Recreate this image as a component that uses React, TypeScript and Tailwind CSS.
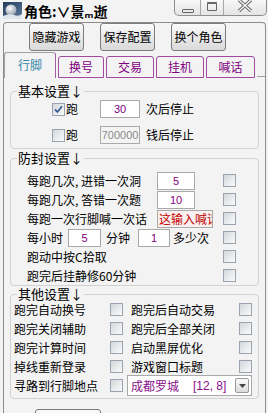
import React from "react";

const FONT = "font-['Noto_Sans_CJK_SC','Noto_Sans',sans-serif]";

function Check({ checked = false }: { checked?: boolean }) {
  return (
    <span className="w-[13px] h-[13px] shrink-0 border border-[#9ba4ae] bg-linear-to-br from-[#d3d7db] to-[#fbfbfb] flex items-center justify-center">
      {checked && (
        <svg width="9" height="9" viewBox="0 0 9 9">
          <path d="M1 4.5 L3.5 7 L8 1.2" fill="none" stroke="#3d5f96" strokeWidth="1.8" />
        </svg>
      )}
    </span>
  );
}

function Field({ className, children }: { className: string; children?: React.ReactNode }) {
  return (
    <span
      className={`h-[18px] shrink-0 border border-[#a9a9a9] flex items-center justify-center text-[11px] font-['Liberation_Sans',sans-serif] ${className}`}
    >
      {children}
    </span>
  );
}

function Group({ title, className, children }: { title: string; className: string; children: React.ReactNode }) {
  return (
    <fieldset className={`border border-[#d2d2d2] rounded-[4px] ${className}`}>
      <legend className="ml-[6px] px-[1px] text-[13px] leading-[14px]">{title}</legend>
      {children}
    </fieldset>
  );
}

function TitleBar() {
  return (
    <div className="h-[22px] flex items-start">
      <svg width="19" height="17" viewBox="0 0 19 17" className="mt-[2px] ml-[3px]">
        <defs>
          <linearGradient id="sky" x1="0" y1="0" x2="1" y2="1">
            <stop offset="0" stopColor="#223a5a" />
            <stop offset="1" stopColor="#5c7c9c" />
          </linearGradient>
          <radialGradient id="moon" cx="0.4" cy="0.35" r="0.7">
            <stop offset="0" stopColor="#ffffff" />
            <stop offset="1" stopColor="#8c9aa8" />
          </radialGradient>
        </defs>
        <rect x="0" y="0" width="19" height="17" fill="url(#sky)" />
        <circle cx="8" cy="8" r="5.5" fill="url(#moon)" />
        <path d="M0 14 Q6 11 11 13 T19 12 V17 H0 Z" fill="#dfe6ec" />
      </svg>
      <span className="ml-[2px] mt-[2px] text-[14px] leading-[18px] font-bold">角色:∨景ₘ逝</span>
      <div className="ml-auto mr-[1px] h-[16px] w-[93px] flex border border-t-0 border-[#8e8e8e] rounded-b-[5px] bg-linear-to-b from-[#f8f8f8] to-[#e4e4e4]">
        <div className="w-[26px] border-r border-[#a8a8a8] flex items-end justify-center pb-[2px]">
          <span className="w-[12px] h-[4px] border border-[#666] rounded-[1px]" />
        </div>
        <div className="w-[23px] border-r border-[#a8a8a8] flex items-start justify-center pt-[2px]">
          <span className="w-[10px] h-[9px] border border-[#666] border-t-2 rounded-[1px]" />
        </div>
        <div className="flex-1 flex items-start justify-center">
          <svg width="16" height="12" viewBox="0 0 16 12">
            <path d="M2 0 L14 11 M14 0 L2 11" stroke="#6a6a6a" strokeWidth="3.4" />
            <path d="M2 0 L14 11 M14 0 L2 11" stroke="#f4f4f4" strokeWidth="1.4" />
          </svg>
        </div>
      </div>
    </div>
  );
}

const tabs = [
  { name: "行脚", w: "w-[52px]" },
  { name: "换号", w: "w-[46px]" },
  { name: "交易", w: "w-[48px]" },
  { name: "挂机", w: "w-[48px]" },
  { name: "喊话", w: "w-[49px]" },
];

function Tabs() {
  return (
    <div className="mt-[1px] h-[26px] flex items-end gap-[2px]">
      {tabs.map((t, i) =>
        i === 0 ? (
          <div
            key={t.name}
            className={`${t.w} h-[26px] border border-b-0 border-[#a0a0a0] border-r-[#a060a0] rounded-t-[3px] text-[12px] text-[#3388aa] flex items-center justify-center pb-[2px]`}
          >
            {t.name}
          </div>
        ) : (
          <div
            key={t.name}
            className={`${t.w} h-[22px] border border-[#a24aa2] rounded-t-[3px] text-[12px] text-[#7d007d] flex items-center justify-center`}
          >
            {t.name}
          </div>
        )
      )}
      <div className="flex-1 h-[1px] mb-[1px] bg-[#a0a0a0]" />
    </div>
  );
}

function Button({ label, className = "" }: { label: string; className?: string }) {
  return (
    <div
      className={`w-[55px] h-[28px] border border-[#7d7d7d] rounded-[3px] bg-linear-to-b from-[#fafafa] to-[#d9d9d9] flex items-center justify-center text-[12px] ${className}`}
    >
      {label}
    </div>
  );
}

const other = [
  ["跑完自动换号", "跑完后自动交易"],
  ["跑完关闭辅助", "跑完后全部关闭"],
  ["跑完计算时间", "启动黑屏优化"],
  ["掉线重新登录", "游戏窗口标题"],
];

export default function App() {
  return (
    <div className={`w-[268px] h-[413px] overflow-hidden bg-[#f3f3f3] text-black ${FONT}`}>
      <TitleBar />
      <div className="ml-[3px] w-[263px] h-[391px] border border-b-0 border-[#8d8d8d] rounded-t-[4px] flex flex-col">
        <div className="flex pl-[25px] gap-[16px]">
          <Button label="隐藏游戏" />
          <Button label="保存配置" />
          <Button label="换个角色" />
        </div>
        <Tabs />

        <div className="pl-[6px] flex flex-col text-[12px] leading-[14px]">
          <Group title="基本设置↓" className="mt-[6px] w-[249px] pb-[4px]">
            <div className="mt-[2px] h-[18px] flex items-center pl-[41px]">
              <Check checked />
              <span className="ml-[1px]">跑</span>
              <Field className="ml-[22px] w-[40px] bg-white text-[#800080]">30</Field>
              <span className="ml-[6px]">次后停止</span>
            </div>
            <div className="mt-[8px] h-[18px] flex items-center pl-[41px]">
              <Check />
              <span className="ml-[1px]">跑</span>
              <Field className="ml-[22px] w-[40px] bg-[#f4f4f4] text-[#8a8a8a]">700000</Field>
              <span className="ml-[6px]">钱后停止</span>
            </div>
          </Group>

          <Group title="防封设置↓" className="mt-[2px] w-[249px] pr-[22px]">
            <div className="mt-[6px] flex flex-col">
              <div className="h-[19px] flex items-center pl-[16px]">
                <span className="w-[130px]">每跑几次, 进错一次洞</span>
                <Field className="w-[38px] bg-white text-[#800080]">5</Field>
                <span className="ml-auto"><Check /></span>
              </div>
              <div className="h-[19px] flex items-center pl-[16px]">
                <span className="w-[130px]">每跑几次, 答错一次题</span>
                <Field className="w-[38px] bg-white text-[#800080]">10</Field>
                <span className="ml-auto"><Check /></span>
              </div>
              <div className="h-[19px] flex items-center pl-[16px]">
                <span className="w-[130px] whitespace-nowrap">每跑一次行脚喊一次话</span>
                <Field className="w-[56px] bg-[#fbf0f0] text-[#c00000] text-[12px] justify-start pl-[1px] overflow-hidden whitespace-nowrap font-['Noto_Sans_CJK_SC',sans-serif]">
                  这输入喊话
                </Field>
                <span className="ml-auto"><Check /></span>
              </div>
              <div className="h-[19px] flex items-center pl-[16px]">
                <span>每小时</span>
                <Field className="ml-[5px] w-[33px] bg-white text-[#800080]">5</Field>
                <span className="ml-[5px]">分钟</span>
                <Field className="ml-[8px] w-[32px] bg-white text-[#800080]">1</Field>
                <span className="ml-[3px]">多少次</span>
                <span className="ml-auto"><Check /></span>
              </div>
              <div className="h-[19px] flex items-center pl-[16px]">
                <span>跑动中按C拾取</span>
                <span className="ml-auto"><Check /></span>
              </div>
              <div className="h-[19px] flex items-center pl-[16px]">
                <span>跑完后挂静修60分钟</span>
                <span className="ml-auto"><Check /></span>
              </div>
            </div>
          </Group>

          <Group title="其他设置↓" className="mt-[1px] w-[249px] pb-[3px]">
            <div className="-mt-[1px] flex flex-col pl-[3px] pr-[6px]">
              {other.map(([a, b]) => (
                <div key={a} className="h-[19px] flex items-center">
                  <span className="w-[96px]">{a}</span>
                  <Check />
                  <span className="ml-[8px]">{b}</span>
                  <span className="ml-auto"><Check /></span>
                </div>
              ))}
              <div className="h-[19px] flex items-center">
                <span className="w-[96px]">寻路到行脚地点</span>
                <Check />
                <div className="ml-[4px] flex-1 h-[21px] border border-[#a9a9a9] bg-white flex items-center pl-[3px] pr-[2px] text-[#8a108a]">
                  <span>成都罗城</span>
                  <span className="ml-[14px] font-['Liberation_Sans',sans-serif] text-[12px]">[12, 8]</span>
                  <span className="ml-auto w-[14px] h-[15px] border border-[#9a9a9a] rounded-[2px] bg-linear-to-b from-[#fafafa] to-[#dcdcdc] flex items-center justify-center">
                    <svg width="7" height="4" viewBox="0 0 7 4">
                      <path d="M0 0 H7 L3.5 4 Z" fill="#444" />
                    </svg>
                  </span>
                </div>
              </div>
            </div>
          </Group>

          <div className="mt-[10px] ml-[25px] w-[66px] h-[27px] border border-[#7d7d7d] rounded-[3px] bg-linear-to-b from-[#fafafa] to-[#d9d9d9]" />
        </div>
      </div>
    </div>
  );
}
